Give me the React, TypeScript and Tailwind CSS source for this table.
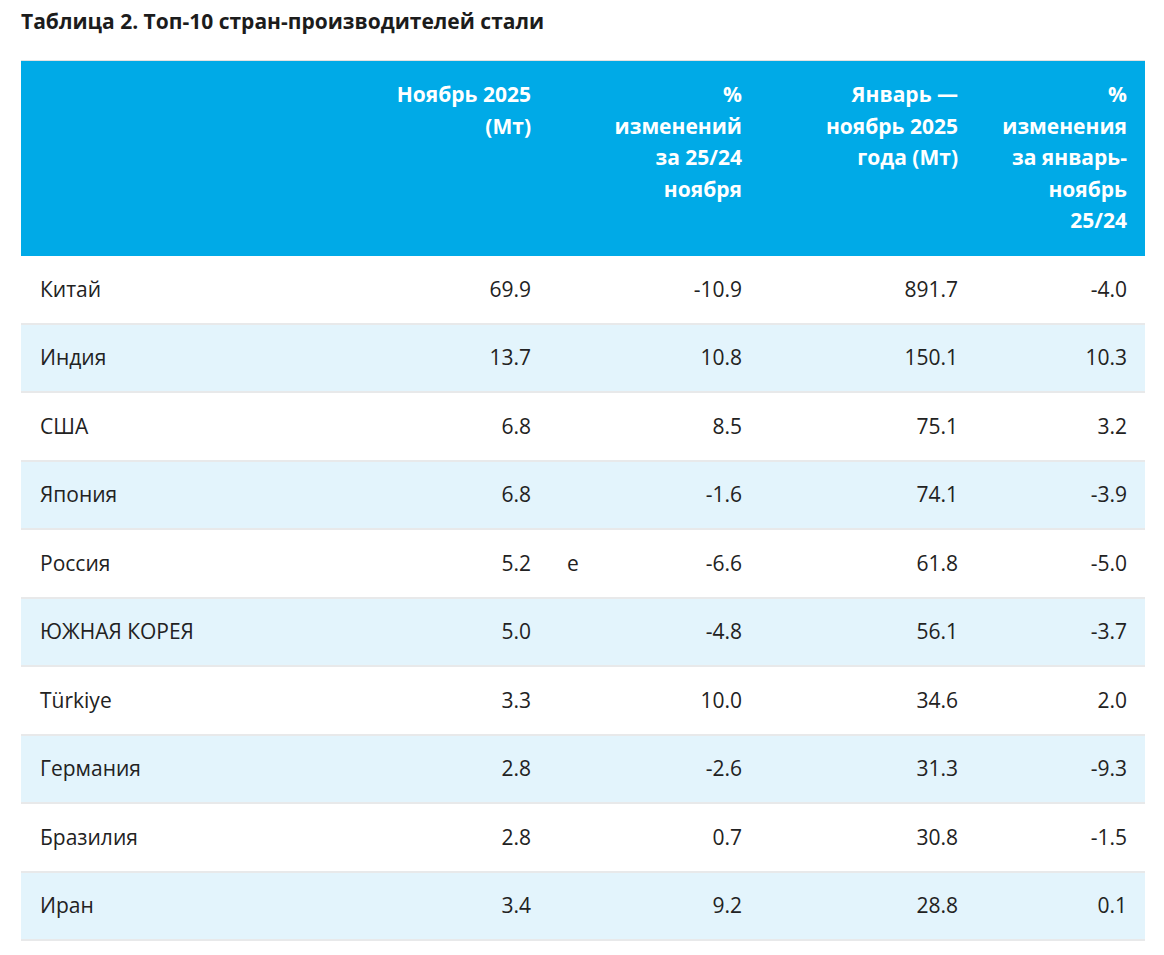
import React from "react";

/* ------------ Data ------------ */

type Row = {
  country: string;
  nov: string;
  flag?: string;
  novChange: string;
  ytd: string;
  ytdChange: string;
};

const rows: Row[] = [
  { country: "Китай", nov: "69.9", novChange: "-10.9", ytd: "891.7", ytdChange: "-4.0" },
  { country: "Индия", nov: "13.7", novChange: "10.8", ytd: "150.1", ytdChange: "10.3" },
  { country: "США", nov: "6.8", novChange: "8.5", ytd: "75.1", ytdChange: "3.2" },
  { country: "Япония", nov: "6.8", novChange: "-1.6", ytd: "74.1", ytdChange: "-3.9" },
  { country: "Россия", nov: "5.2", flag: "e", novChange: "-6.6", ytd: "61.8", ytdChange: "-5.0" },
  { country: "ЮЖНАЯ КОРЕЯ", nov: "5.0", novChange: "-4.8", ytd: "56.1", ytdChange: "-3.7" },
  { country: "Türkiye", nov: "3.3", novChange: "10.0", ytd: "34.6", ytdChange: "2.0" },
  { country: "Германия", nov: "2.8", novChange: "-2.6", ytd: "31.3", ytdChange: "-9.3" },
  { country: "Бразилия", nov: "2.8", novChange: "0.7", ytd: "30.8", ytdChange: "-1.5" },
  { country: "Иран", nov: "3.4", novChange: "9.2", ytd: "28.8", ytdChange: "0.1" },
];

/* ------------ Header cell ------------ */

function HeadCell({ lines }: { lines: string[] }) {
  return (
    <th className="px-[18px] pt-[18px] pb-[19.5px] text-right align-top font-bold">
      {lines.map((l) => (
        <span key={l} className="block whitespace-nowrap">
          {l}
        </span>
      ))}
    </th>
  );
}

export default function App() {
  return (
    <div
      className="min-h-[955px] bg-white px-[21px] pt-[7px] text-[#222]"
      style={{ fontFamily: '"Open Sans", "Noto Sans", sans-serif' }}
    >
      <h2 className="text-[21px] font-bold leading-[29px] text-[#1c1c1c]">
        Таблица 2. Топ-10 стран-производителей стали
      </h2>

      <table className="mt-[24px] w-[1124px] table-fixed border-collapse border-t border-[#e2e2e2] text-[21px] leading-[31.5px]">
        <colgroup>
          <col className="w-[339px]" />
          <col className="w-[189px]" />
          <col className="w-[41px]" />
          <col className="w-[170px]" />
          <col className="w-[216px]" />
          <col className="w-[169px]" />
        </colgroup>
        <thead>
          <tr className="bg-[#00aae7] text-white">
            <th />
            <HeadCell lines={["Ноябрь 2025", "(Мт)"]} />
            <th />
            <HeadCell lines={["%", "изменений", "за 25/24", "ноября"]} />
            <HeadCell lines={["Январь —", "ноябрь 2025", "года (Мт)"]} />
            <HeadCell lines={["%", "изменения", "за январь-", "ноябрь", "25/24"]} />
          </tr>
        </thead>
        <tbody>
          {rows.map((r, i) => (
            <tr
              key={r.country}
              className={
                "border-b-2 border-[#e8e9ea] " +
                (i % 2 === 1 ? "bg-[#e3f4fc]" : "bg-white")
              }
            >
              <td className="px-[19px] py-[17.5px]">{r.country}</td>
              <td className="px-[18px] py-[17.5px] text-right">{r.nov}</td>
              <td className="px-[18px] py-[17.5px]">{r.flag ?? ""}</td>
              <td className="px-[18px] py-[17.5px] text-right">{r.novChange}</td>
              <td className="px-[18px] py-[17.5px] text-right">{r.ytd}</td>
              <td className="px-[18px] py-[17.5px] text-right">{r.ytdChange}</td>
            </tr>
          ))}
        </tbody>
      </table>
    </div>
  );
}
